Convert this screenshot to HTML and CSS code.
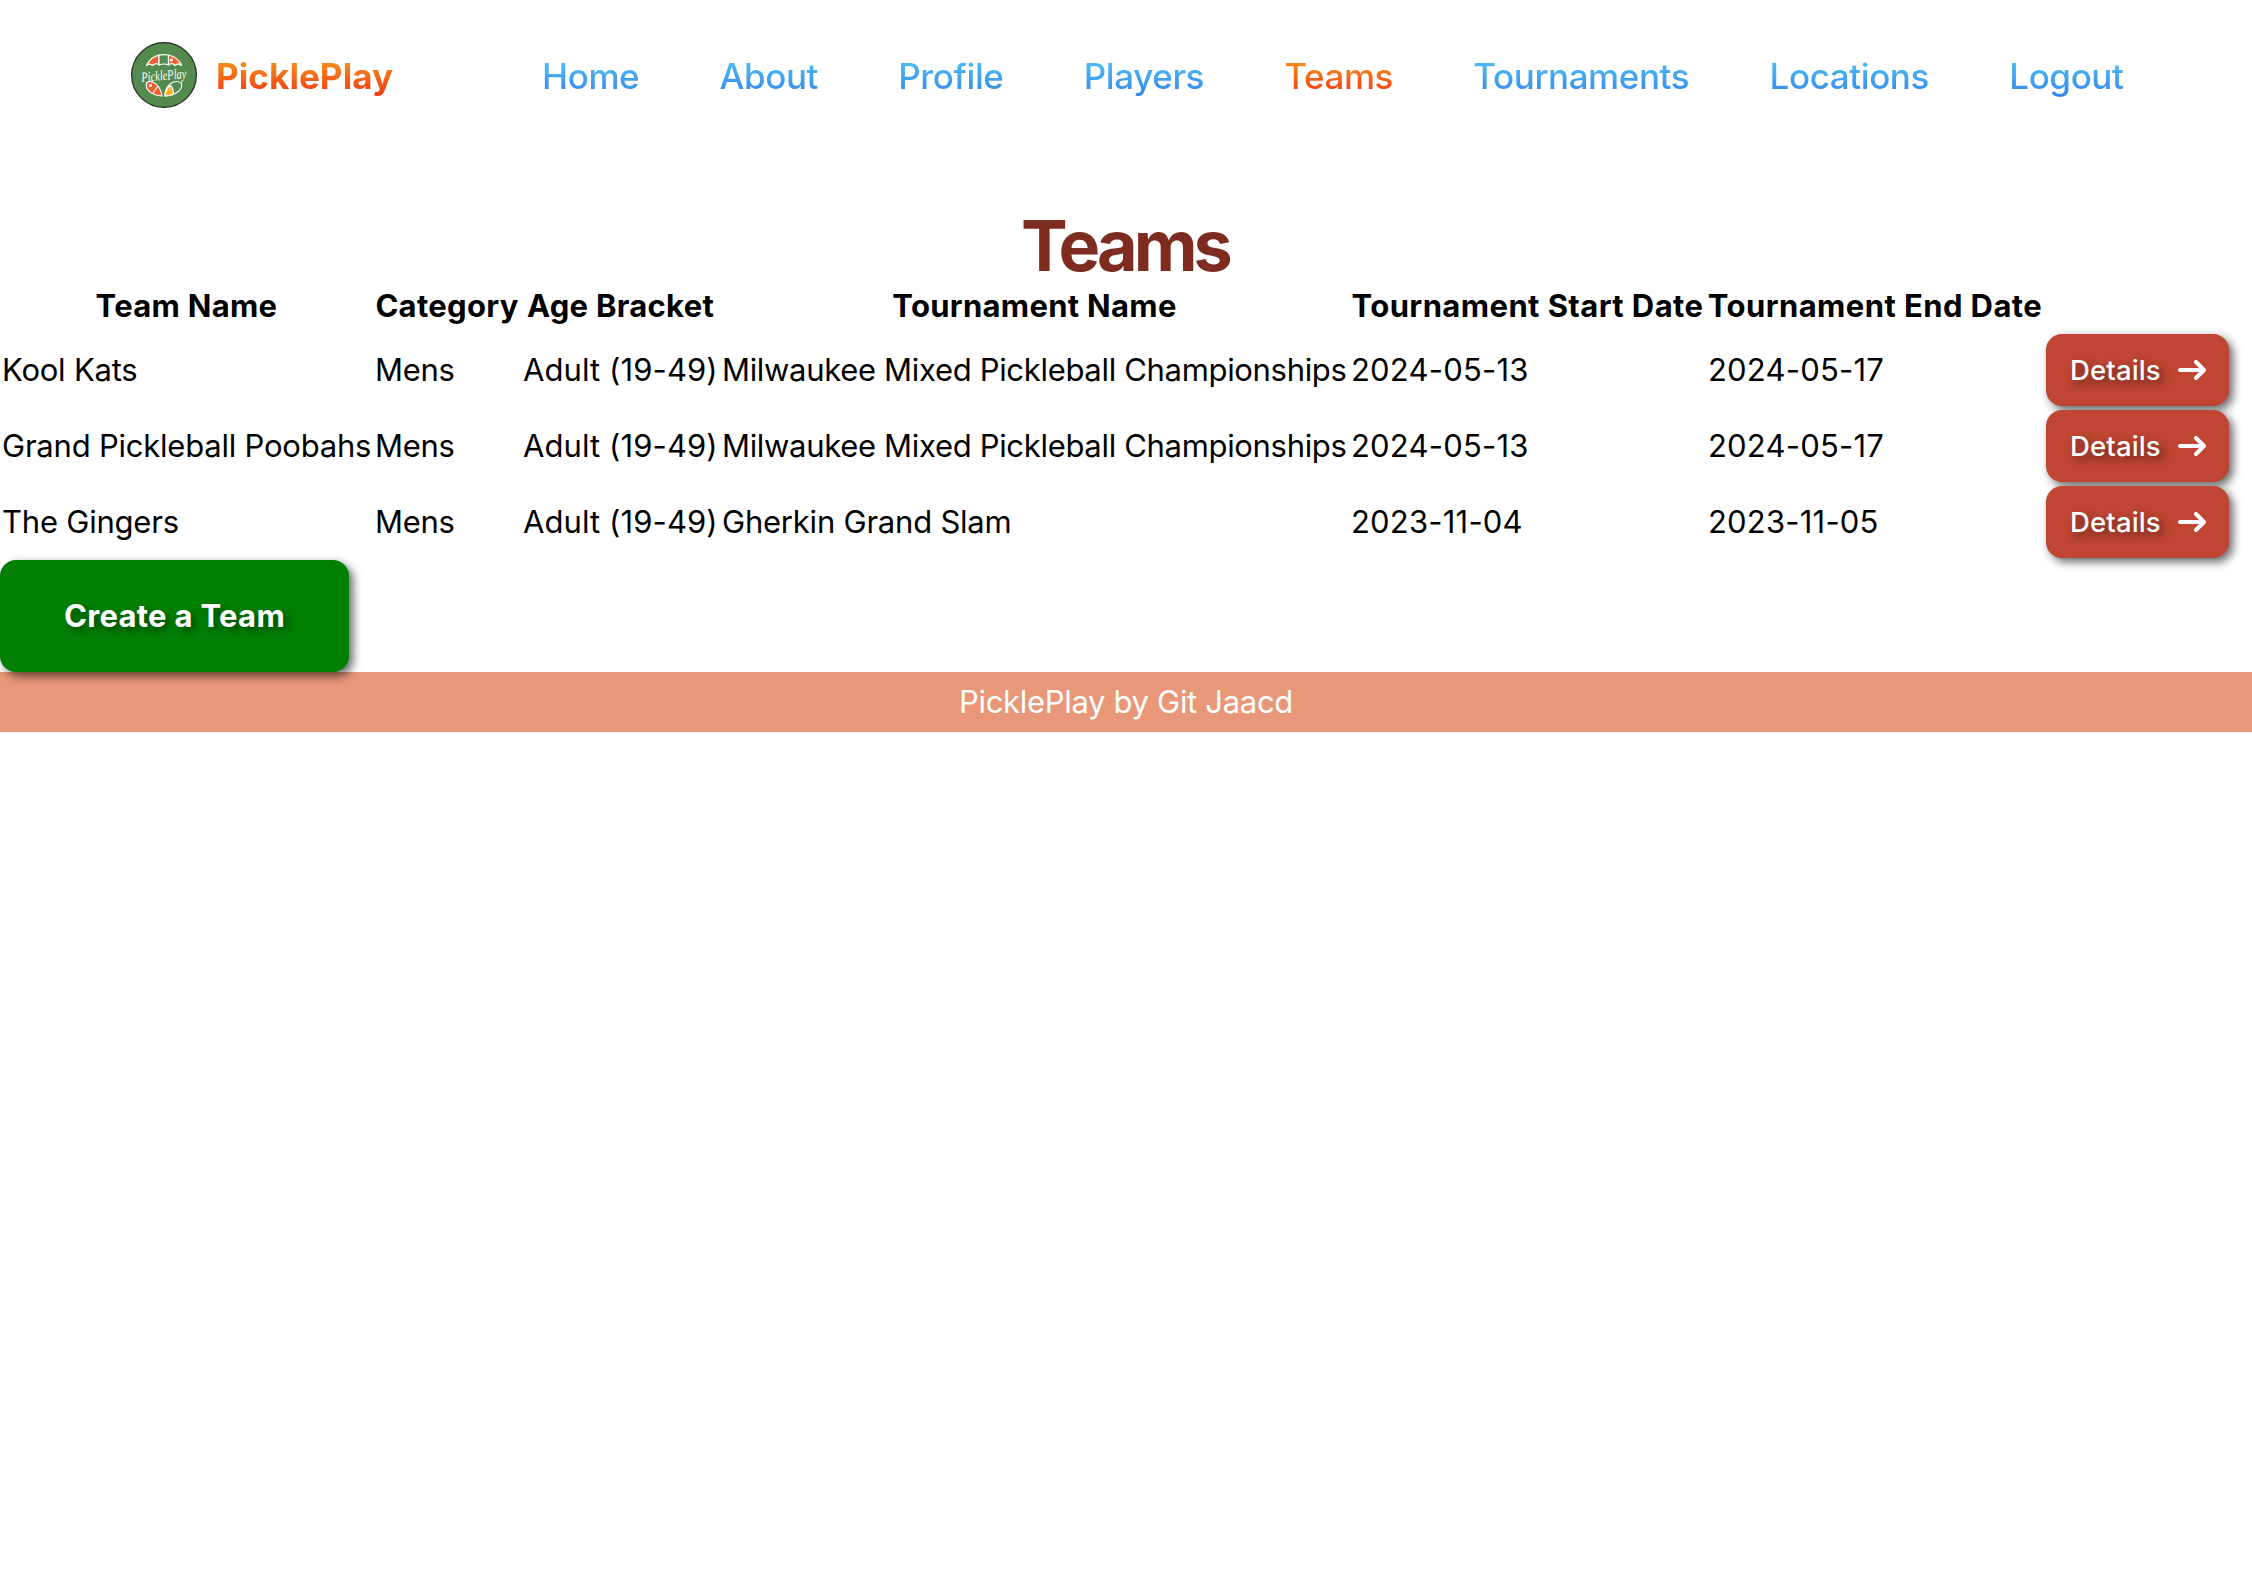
FILE: index.html
```html
<!DOCTYPE html>
<html lang="en">
<head>
<meta charset="utf-8">
<title>PicklePlay</title>
<link rel="stylesheet" href="styles.css">
</head>
<body>
<header class="site-header">
  <a class="brand">
    <svg class="logo" viewBox="0 0 66 66">
      <circle cx="33" cy="33" r="32.4" fill="#548a4e" stroke="#222b22" stroke-width="1.2"/>
      <g stroke="#fff" stroke-width="1.2" stroke-linejoin="round">
        <path d="M15.500 23.500C18 18 22 14.500 28 13.200V23Q25 20 21.500 23.500Q18.500 20.500 15.500 23.500Z" fill="#f15f30"/>
        <path d="M28 13.200Q33 12 37.500 13V23Q33 21 28 23Z" fill="#548a4e"/>
        <path d="M37.500 13C44 14.500 48.500 18 50.500 23.500Q47 20.500 44 23.500Q41 20 37.500 23Z" fill="#f15f30"/>
        <path d="M31 54C19 53 14 47 15.500 41C19 37 29 41 31 54Z" fill="#f15f30"/>
        <path d="M34 54C34 42 44 37 50.500 41C52 48 45 53 34 54Z" fill="#548a4e"/>
        <path d="M34 54C34 49 36 46 39.500 43.500Q43 47 42 52.500Q38 54 34 54Z" fill="#f9b224"/>
        <path d="M22 51L27 44" fill="none"/>
      </g>
      <circle cx="19.500" cy="43.500" r="1.500" fill="#fff"/><circle cx="40.500" cy="18" r="1.500" fill="#fff"/>
      <text class="logo-text" x="33" y="38" text-anchor="middle" textLength="45" lengthAdjust="spacingAndGlyphs" transform="rotate(-5 33 36)">PicklePlay</text>
    </svg>
    <span class="brand-name">PicklePlay</span>
  </a>
  <nav class="nav">
    <a>Home</a><a>About</a><a>Profile</a><a>Players</a><a class="active">Teams</a><a>Tournaments</a><a>Locations</a><a>Logout</a>
  </nav>
</header>
<main>
  <h1>Teams</h1>
  <table>
    <colgroup><col class="c1"><col class="c2"><col class="c3"><col class="c4"><col class="c5"><col class="c6"><col></colgroup>
    <thead>
      <tr><th>Team Name</th><th>Category</th><th>Age Bracket</th><th>Tournament Name</th><th class="date">Tournament Start Date</th><th class="date">Tournament End Date</th><th></th></tr>
    </thead>
    <tbody>
      <tr><td class="team">Kool Kats</td><td>Mens</td><td class="age">Adult (19-49)</td><td>Milwaukee Mixed Pickleball Championships</td><td class="num">2024-05-13</td><td class="num">2024-05-17</td><td class="action"><a class="details"><span>Details</span><svg viewBox="0 0 28 20"><path d="M2 10H25M18 2L26 10L18 18"/></svg></a></td></tr>
      <tr><td class="team">Grand Pickleball Poobahs</td><td>Mens</td><td class="age">Adult (19-49)</td><td>Milwaukee Mixed Pickleball Championships</td><td class="num">2024-05-13</td><td class="num">2024-05-17</td><td class="action"><a class="details"><span>Details</span><svg viewBox="0 0 28 20"><path d="M2 10H25M18 2L26 10L18 18"/></svg></a></td></tr>
      <tr><td class="team">The Gingers</td><td>Mens</td><td class="age">Adult (19-49)</td><td class="team">Gherkin Grand Slam</td><td class="num">2023-11-04</td><td class="num">2023-11-05</td><td class="action"><a class="details"><span>Details</span><svg viewBox="0 0 28 20"><path d="M2 10H25M18 2L26 10L18 18"/></svg></a></td></tr>
    </tbody>
  </table>
  <a class="create">Create a Team</a>
</main>
<footer>PicklePlay by Git Jaacd</footer>
</body>
</html>
```
FILE: styles.css
```css
* { box-sizing: border-box; }

body {
  margin: 0;
  background: #fff;
  color: #000;
  font: 400 31px/48px Inter, "Liberation Sans", sans-serif;
  letter-spacing: -0.32px;
}

/* Header */
.site-header { display: flex; align-items: center; height: 152px; padding-left: 131px; }
.brand { display: flex; align-items: center; gap: 19px; width: 411px; }
.logo { width: 66px; height: 66px; margin-bottom: 2px; overflow: visible; }
.logo-text { font: italic 400 14px "Liberation Serif", serif; letter-spacing: 0; fill: #fff; }

.brand-name,
.nav a {
  font-size: 35px;
  line-height: 56px;
  color: transparent;
  background: linear-gradient(#57d2f6, #3079eb);
  -webkit-background-clip: text;
  background-clip: text;
}

.brand-name,
.nav .active { background-image: linear-gradient(#f8b21c, #f22212); }

.brand-name { font-weight: 700; letter-spacing: 0.08px; }
.nav { display: flex; gap: 80.3px; font-weight: 500; letter-spacing: -0.41px; }

/* Teams table */
h1 {
  margin: 0;
  padding: 54px 2px 0 0;
  height: 128px;
  text-align: center;
  font-size: 70px;
  line-height: 80px;
  font-weight: 700;
  letter-spacing: -3.9px;
  color: #7f2c20;
}

table { width: 100%; table-layout: fixed; border-collapse: collapse; }
th, td { white-space: nowrap; text-align: left; }
th { height: 52px; padding: 2px 0; text-align: center; font-weight: 700; letter-spacing: 0.3px; }
th.date { letter-spacing: 0.42px; }
td { height: 76px; padding: 2px; }
td.team { letter-spacing: -0.22px; }
td.age { letter-spacing: 0.1px; }
td.num { letter-spacing: 0.2px; }
.c1 { width: 373px; }
.c2 { width: 148px; }
.c3 { width: 199px; }
.c4 { width: 629px; }
.c5 { width: 357px; }
.c6 { width: 338px; }

/* Buttons */
.details,
.create {
  display: flex;
  align-items: center;
  border-radius: 16px;
  color: #fff;
  box-shadow: 4px 4px 10px rgba(0, 0, 0, 0.6);
  text-shadow: 4px 4px 8px rgba(0, 0, 0, 0.5);
}

.details {
  width: 183px;
  height: 72px;
  padding-left: 24px;
  background: #c04532;
  font-size: 27.5px;
  font-weight: 500;
  letter-spacing: 0.15px;
}

.details svg {
  width: 28px;
  height: 20px;
  margin-left: 17px;
  fill: none;
  stroke: #fff;
  stroke-width: 4;
  stroke-linecap: round;
  stroke-linejoin: round;
}

.create {
  position: relative;
  justify-content: center;
  width: 349px;
  height: 112px;
  background: #008000;
  font-weight: 700;
  letter-spacing: 0.3px;
}

footer { height: 60px; padding-top: 6px; text-align: center; background: #e89778; color: #fff; }
```
